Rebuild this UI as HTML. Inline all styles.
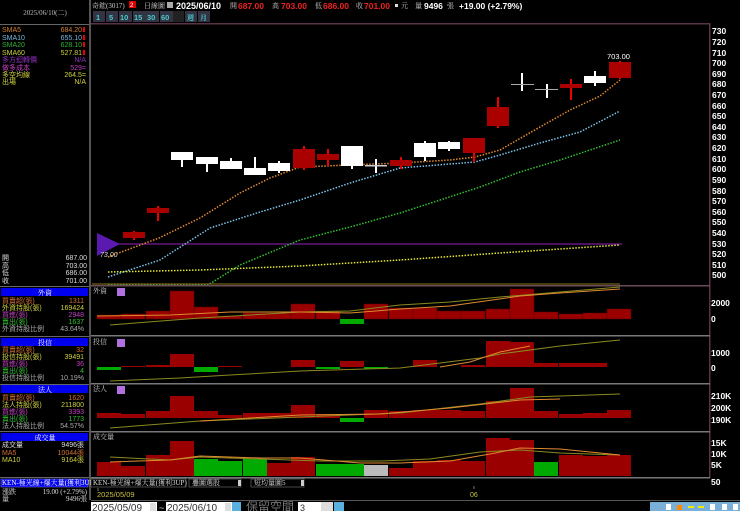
<!DOCTYPE html>
<html><head><meta charset="utf-8"><style>
html,body{margin:0;padding:0;background:#000;width:740px;height:511px;overflow:hidden}
svg{display:block}
text{font-family:"Liberation Sans","Noto Sans CJK TC",sans-serif}
.s{font-size:7px;font-family:"Liberation Serif","Noto Serif CJK SC",serif}
.ax{font-size:8.5px;fill:#fff;font-weight:bold}
</style></head><body>
<svg width="740" height="511" viewBox="0 0 740 511" xmlns="http://www.w3.org/2000/svg">
<rect width="740" height="511" fill="#000"/>
<!-- left panel -->
<rect x="89" y="0" width="2" height="500" fill="#555"/>
<text x="45" y="15" class="s" fill="#bbb" text-anchor="middle">2025/06/10(二)</text>
<rect x="0" y="24" width="89" height="1" fill="#666"/>
<g class="s">
<text x="2" y="32" fill="#d08030">SMA5</text><text x="82" y="32" fill="#d08030" text-anchor="end">684.20</text>
<text x="2" y="40" fill="#7ab8e0">SMA10</text><text x="82" y="40" fill="#7ab8e0" text-anchor="end">655.10</text>
<text x="2" y="47" fill="#30b030">SMA20</text><text x="82" y="47" fill="#30b030" text-anchor="end">628.10</text>
<text x="2" y="55" fill="#d0d040">SMA60</text><text x="82" y="55" fill="#d0d040" text-anchor="end">527.81</text>
<text x="2" y="62" fill="#9030c0">多方迴轉價</text><text x="86" y="62" fill="#9030c0" text-anchor="end">N/A</text>
<text x="2" y="70" fill="#c040c0">做多成本</text><text x="86" y="70" fill="#c040c0" text-anchor="end">529=</text>
<text x="2" y="77" fill="#d0d040">多空均線</text><text x="86" y="77" fill="#d0d040" text-anchor="end">264.5=</text>
<text x="2" y="84" fill="#d0d040">出場</text><text x="86" y="84" fill="#d0d040" text-anchor="end">N/A</text>
</g>
<g fill="#e00"><rect x="83" y="27" width="2" height="5"/><rect x="83" y="35" width="2" height="5"/><rect x="83" y="42" width="2" height="5"/><rect x="83" y="50" width="2" height="5"/></g>
<g class="s" fill="#ddd">
<text x="2" y="260">開</text><text x="87" y="260" text-anchor="end">687.00</text>
<text x="2" y="268">高</text><text x="87" y="268" text-anchor="end">703.00</text>
<text x="2" y="275">低</text><text x="87" y="275" text-anchor="end">686.00</text>
<text x="2" y="283">收</text><text x="87" y="283" text-anchor="end">701.00</text>
</g>
<rect x="0" y="286" width="89" height="1" fill="#666"/>
<rect x="1" y="288" width="87" height="8" fill="#0000ee"/><text x="45" y="295" class="s" fill="#fff" text-anchor="middle">外資</text>
<g class="s">
<text x="2" y="303" fill="#d07030">買賣超(張)</text><text x="84" y="303" fill="#d07030" text-anchor="end">1311</text>
<text x="2" y="310" fill="#d0d040">外資持股(張)</text><text x="84" y="310" fill="#d0d040" text-anchor="end">169424</text>
<text x="2" y="317" fill="#c040c0">買進(張)</text><text x="84" y="317" fill="#c040c0" text-anchor="end">2948</text>
<text x="2" y="324" fill="#30c030">賣出(張)</text><text x="84" y="324" fill="#30c030" text-anchor="end">1637</text>
<text x="2" y="331" fill="#aaa">外資持股比例</text><text x="84" y="331" fill="#aaa" text-anchor="end">43.64%</text>
</g>
<rect x="0" y="336" width="89" height="1" fill="#666"/>
<rect x="1" y="338" width="87" height="8" fill="#0000ee"/><text x="45" y="345" class="s" fill="#fff" text-anchor="middle">投信</text>
<g class="s">
<text x="2" y="352" fill="#d07030">買賣超(張)</text><text x="84" y="352" fill="#d07030" text-anchor="end">32</text>
<text x="2" y="359" fill="#d0d040">投信持股(張)</text><text x="84" y="359" fill="#d0d040" text-anchor="end">39491</text>
<text x="2" y="366" fill="#c040c0">買進(張)</text><text x="84" y="366" fill="#c040c0" text-anchor="end">36</text>
<text x="2" y="373" fill="#30c030">賣出(張)</text><text x="84" y="373" fill="#30c030" text-anchor="end">4</text>
<text x="2" y="380" fill="#aaa">投信持股比例</text><text x="84" y="380" fill="#aaa" text-anchor="end">10.19%</text>
</g>
<rect x="0" y="384" width="89" height="1" fill="#666"/>
<rect x="1" y="385" width="87" height="8" fill="#0000ee"/><text x="45" y="392" class="s" fill="#fff" text-anchor="middle">法人</text>
<g class="s">
<text x="2" y="400" fill="#d07030">買賣超(張)</text><text x="84" y="400" fill="#d07030" text-anchor="end">1620</text>
<text x="2" y="407" fill="#d0d040">法人持股(張)</text><text x="84" y="407" fill="#d0d040" text-anchor="end">211800</text>
<text x="2" y="414" fill="#c040c0">買進(張)</text><text x="84" y="414" fill="#c040c0" text-anchor="end">3393</text>
<text x="2" y="421" fill="#30c030">賣出(張)</text><text x="84" y="421" fill="#30c030" text-anchor="end">1773</text>
<text x="2" y="428" fill="#aaa">法人持股比例</text><text x="84" y="428" fill="#aaa" text-anchor="end">54.57%</text>
</g>
<rect x="0" y="431" width="89" height="1" fill="#666"/>
<rect x="1" y="433" width="87" height="8" fill="#0000ee"/><text x="45" y="440" class="s" fill="#fff" text-anchor="middle">成交量</text>
<g class="s">
<text x="2" y="447" fill="#ddd">成交量</text><text x="84" y="447" fill="#ddd" text-anchor="end">9496張</text>
<text x="2" y="455" fill="#d07030">MA5</text><text x="84" y="455" fill="#d07030" text-anchor="end">10044張</text>
<text x="2" y="462" fill="#d0d040">MA10</text><text x="84" y="462" fill="#d0d040" text-anchor="end">9164張</text>
</g>
<rect x="0" y="477" width="89" height="1" fill="#666"/>
<rect x="1" y="479" width="87" height="8" fill="#0000ee" stroke="#88f" stroke-width=".5"/><text x="2" y="485" class="s" fill="#fff" font-size="6">KEN-極光線+爆大量(獲利3UP)</text>
<text x="2" y="494" class="s" fill="#ddd">漲跌</text><text x="87" y="494" class="s" fill="#ddd" text-anchor="end">19.00 (+2.79%)</text>
<text x="2" y="501" class="s" fill="#ddd">量</text><text x="87" y="501" class="s" fill="#ddd" text-anchor="end">9496張</text>

<!-- top header -->
<text x="92" y="8" class="s" fill="#ccc">奇鋐(3017)</text><rect x="129" y="1" width="7" height="7" fill="#d00"/><text x="130" y="7" font-size="6" fill="#fff">2</text>
<text x="144" y="8" class="s" fill="#ccc">日線圖</text><rect x="167" y="2" width="6" height="6" fill="#aaa"/>
<text x="176" y="9" font-size="9" font-weight="bold" fill="#fff">2025/06/10</text>
<text x="230" y="8" class="s" fill="#ccc">開</text><text x="238" y="9" font-size="8.5" font-weight="bold" fill="#e22">687.00</text>
<text x="272" y="8" class="s" fill="#ccc">高</text><text x="281" y="9" font-size="8.5" font-weight="bold" fill="#e22">703.00</text>
<text x="315" y="8" class="s" fill="#ccc">低</text><text x="323" y="9" font-size="8.5" font-weight="bold" fill="#e22">686.00</text>
<text x="356" y="8" class="s" fill="#ccc">收</text><text x="364" y="9" font-size="8.5" font-weight="bold" fill="#e22">701.00</text>
<rect x="395" y="4" width="3" height="3" fill="#ddd"/><text x="401" y="8" class="s" fill="#ccc">元　量</text>
<text x="424" y="9" font-size="8.5" font-weight="bold" fill="#fff">9496</text><text x="447" y="8" class="s" fill="#ccc">張</text>
<text x="459" y="9" font-size="8.5" font-weight="bold" fill="#fff">+19.00 (+2.79%)</text>
<g font-size="7.5" font-weight="bold" fill="#4cc">
<rect x="93" y="11" width="12" height="11" fill="#334"/><text x="96" y="20">1</text>
<rect x="106" y="11" width="12" height="11" fill="#334"/><text x="109" y="20">5</text>
<rect x="119" y="11" width="13" height="11" fill="#334"/><text x="120" y="20">10</text>
<rect x="133" y="11" width="13" height="11" fill="#334"/><text x="134" y="20">15</text>
<rect x="146" y="11" width="13" height="11" fill="#334"/><text x="147" y="20">30</text>
<rect x="160" y="11" width="13" height="11" fill="#334"/><text x="161" y="20">60</text>
<rect x="173" y="11" width="11" height="11" fill="#222"/>
<rect x="185" y="11" width="12" height="11" fill="#334"/><text x="187" y="20" class="s" font-size="7">週</text>
<rect x="198" y="11" width="12" height="11" fill="#334"/><text x="200" y="20" class="s" font-size="7">月</text>
</g>
<rect x="91" y="23" width="619" height="1.5" fill="#5a3348"/>
<rect x="709" y="23" width="1.5" height="455" fill="#5a3348"/>

<!-- axis -->
<g class="ax">
<text x="712" y="34">730</text><text x="712" y="45">720</text><text x="712" y="56">710</text><text x="712" y="66">700</text><text x="712" y="77">690</text><text x="712" y="87">680</text><text x="712" y="98">670</text><text x="712" y="109">660</text><text x="712" y="119">650</text><text x="712" y="130">640</text><text x="712" y="140">630</text><text x="712" y="151">620</text><text x="712" y="162">610</text><text x="712" y="172">600</text><text x="712" y="183">590</text><text x="712" y="194">580</text><text x="712" y="204">570</text><text x="712" y="215">560</text><text x="712" y="225">550</text><text x="712" y="236">540</text><text x="712" y="247">530</text><text x="712" y="257">520</text><text x="712" y="268">510</text><text x="712" y="278">500</text>
<text x="711" y="306">2000</text><text x="711" y="322">0</text>
<text x="711" y="356">1000</text><text x="711" y="371">0</text>
<text x="711" y="399">210K</text><text x="711" y="411">200K</text><text x="711" y="423">190K</text>
<text x="711" y="446">15K</text><text x="711" y="457">10K</text><text x="711" y="468">5K</text>
<text x="711" y="485">50</text>
</g>

<!-- main chart lines -->
<line x1="118" y1="244" x2="622" y2="244" stroke="#7a1a9a" stroke-width="1.2"/>
<polygon points="97,233 97,256 120,244" fill="#5a1ab0"/>
<text x="100" y="257" font-size="7" fill="#ddd" font-style="italic">73.00</text>
<g fill="none" stroke-width="1.5" stroke-dasharray="1.5,1.5">
<polyline stroke="#e08a30" points="108,257 159,238 200,218 240,193 270,178 300,167 350,165 400,163 450,160 475,157 500,150 540,127 570,110 600,96 620,80"/>
<polyline stroke="#7ac0e8" points="108,277 160,260 210,228 260,212 300,200 350,183 400,168 450,164 475,162 500,155 540,143 580,132 620,111"/>
<polyline stroke="#30c030" points="108,285 208,285 240,265 300,240 350,227 400,213 440,200 480,187 520,172 560,160 620,140"/>
<polyline stroke="#e8e830" points="108,272 200,270 300,266 400,260 500,253 560,249 620,245"/>
</g>
<polyline fill="none" stroke="#8a7a20" stroke-width="1" points="92,284 620,284"/>

<!-- candles -->
<g fill="#a00" stroke="none">
<rect x="133" y="231" width="2" height="9" fill="#e00"/><rect x="123" y="232" width="22" height="6"/>
<rect x="157" y="206" width="2" height="15" fill="#e00"/><rect x="147" y="208" width="22" height="5"/>
<rect x="303" y="146" width="2" height="24" fill="#e00"/><rect x="293" y="149" width="22" height="19"/>
<rect x="327" y="149" width="2" height="17" fill="#e00"/><rect x="317" y="154" width="22" height="6"/>
<rect x="400" y="157" width="2" height="12" fill="#e00"/><rect x="390" y="160" width="22" height="6"/>
<rect x="473" y="138" width="2" height="24" fill="#e00"/><rect x="463" y="138" width="22" height="15"/>
<rect x="497" y="97" width="2" height="31" fill="#e00"/><rect x="487" y="107" width="22" height="19"/>
<rect x="570" y="79" width="2" height="21" fill="#e00"/><rect x="560" y="84" width="22" height="4"/>
<rect x="619" y="61" width="2" height="18" fill="#e00"/><rect x="609" y="62" width="22" height="16"/>
</g>
<g fill="#fff">
<rect x="181" y="152" width="2" height="15"/><rect x="171" y="152" width="22" height="8"/>
<rect x="206" y="157" width="2" height="15"/><rect x="196" y="157" width="22" height="7"/>
<rect x="230" y="158" width="2" height="11"/><rect x="220" y="161" width="22" height="8"/>
<rect x="254" y="157" width="2" height="18"/><rect x="244" y="168" width="22" height="7"/>
<rect x="278" y="161" width="2" height="12"/><rect x="268" y="163" width="22" height="8"/>
<rect x="351" y="146" width="2" height="23"/><rect x="341" y="146" width="22" height="20"/>
<rect x="375" y="159" width="2" height="14"/><rect x="365" y="165" width="22" height="1.5" fill="#ccc"/>
<rect x="424" y="141" width="2" height="20"/><rect x="414" y="143" width="22" height="14"/>
<rect x="448" y="141" width="2" height="10"/><rect x="438" y="142" width="22" height="7"/>
<rect x="521" y="73" width="2" height="18"/><rect x="511" y="84" width="23" height="1" fill="#aaa"/>
<rect x="546" y="84" width="2" height="14"/><rect x="535" y="89" width="23" height="1" fill="#aaa"/>
<rect x="594" y="71" width="2" height="15"/><rect x="584" y="76" width="22" height="7"/>
</g>
<text x="607" y="59" font-size="7.5" fill="#fff">703.00</text>

<!-- separators -->
<g fill="#777">
<rect x="91" y="285" width="619" height="1.5" fill="#6a4a5a"/>
<rect x="91" y="335" width="619" height="1.5"/>
<rect x="91" y="383" width="619" height="1.5"/>
<rect x="91" y="431" width="619" height="1.5"/>
<rect x="91" y="477" width="619" height="1.5"/>
</g>
<text x="93" y="293" class="s" fill="#ccc">外資</text><rect x="117" y="288" width="8" height="8" fill="#b070e0"/>
<text x="93" y="344" class="s" fill="#ccc">投信</text><rect x="117" y="339" width="8" height="8" fill="#b070e0"/>
<text x="93" y="391" class="s" fill="#ccc">法人</text><rect x="117" y="386" width="8" height="8" fill="#b070e0"/>
<text x="93" y="439" class="s" fill="#ccc">成交量</text>

<!-- panel1 base 319 -->
<g fill="#9a0000" stroke="#5a0000" stroke-width=".5">
<rect x="97" y="315" width="24" height="4"/><rect x="121" y="314" width="24" height="5"/><rect x="146" y="311" width="24" height="8"/><rect x="170" y="291" width="24" height="28"/><rect x="194" y="307" width="24" height="12"/><rect x="218" y="316" width="24" height="3"/><rect x="243" y="313" width="24" height="6"/><rect x="267" y="313" width="24" height="6"/><rect x="291" y="304" width="24" height="15"/><rect x="316" y="311" width="24" height="8"/><rect x="364" y="304" width="24" height="15"/><rect x="389" y="308" width="24" height="11"/><rect x="413" y="308" width="24" height="11"/><rect x="437" y="311" width="24" height="8"/><rect x="461" y="311" width="24" height="8"/><rect x="486" y="309" width="24" height="10"/><rect x="510" y="289" width="24" height="30"/><rect x="534" y="312" width="24" height="7"/><rect x="559" y="314" width="24" height="5"/><rect x="583" y="313" width="24" height="6"/><rect x="607" y="309" width="24" height="10"/>
</g>
<rect x="340" y="319" width="24" height="5" fill="#0a0"/>
<polyline fill="none" stroke="#8a8a20" stroke-width="1" points="110,325 200,318 300,312 350,311 400,305 450,302 500,297 560,292 620,287"/>
<polyline fill="none" stroke="#e08a30" stroke-width="1" points="97,316 170,315 230,312 300,312 350,313 400,309 450,306 520,296 560,293 620,289"/>

<!-- panel2 base 367 -->
<g fill="#9a0000">
<rect x="121" y="366" width="24" height="1"/><rect x="146" y="365" width="24" height="2"/><rect x="170" y="354" width="24" height="13"/><rect x="218" y="366" width="24" height="1"/><rect x="291" y="360" width="24" height="7"/><rect x="340" y="361" width="24" height="6"/><rect x="413" y="360" width="24" height="7"/><rect x="461" y="365" width="24" height="2"/><rect x="486" y="341" width="24" height="26"/><rect x="510" y="342" width="24" height="25"/><rect x="534" y="363" width="24" height="4"/><rect x="559" y="363" width="24" height="4"/><rect x="583" y="363" width="24" height="4"/>
</g>
<g fill="#0a0"><rect x="97" y="367" width="24" height="3"/><rect x="194" y="367" width="24" height="5"/><rect x="316" y="367" width="24" height="2"/><rect x="364" y="367" width="24" height="2"/></g>
<polyline fill="none" stroke="#8a8a20" stroke-width="1" points="110,381 180,378 230,375 300,371 400,368 480,358 500,354 560,346 620,340"/>
<polyline fill="none" stroke="#e08a30" stroke-width="1" points="440,367 470,362 500,352 530,346"/>

<!-- panel3 base 418 -->
<g fill="#9a0000">
<rect x="97" y="413" width="24" height="5"/><rect x="121" y="414" width="24" height="4"/><rect x="146" y="411" width="24" height="7"/><rect x="170" y="396" width="24" height="22"/><rect x="194" y="411" width="24" height="7"/><rect x="218" y="415" width="24" height="3"/><rect x="243" y="413" width="24" height="5"/><rect x="267" y="413" width="24" height="5"/><rect x="291" y="405" width="24" height="13"/><rect x="316" y="414" width="24" height="4"/><rect x="364" y="410" width="24" height="8"/><rect x="389" y="411" width="24" height="7"/><rect x="413" y="410" width="24" height="8"/><rect x="437" y="410" width="24" height="8"/><rect x="461" y="411" width="24" height="7"/><rect x="486" y="401" width="24" height="17"/><rect x="510" y="388" width="24" height="30"/><rect x="534" y="411" width="24" height="7"/><rect x="559" y="414" width="24" height="4"/><rect x="583" y="413" width="24" height="5"/><rect x="607" y="410" width="24" height="8"/>
</g>
<rect x="340" y="418" width="24" height="4" fill="#0a0"/>
<polyline fill="none" stroke="#8a8a20" stroke-width="1" points="110,428 200,421 300,417 400,413 480,404 530,397 620,394"/>
<polyline fill="none" stroke="#e08a30" stroke-width="1" points="200,421 300,415 380,414 450,408 520,400 560,399"/>

<!-- panel4 base 476 -->
<g fill="#9a0000">
<rect x="97" y="462" width="24" height="14"/><rect x="121" y="466" width="24" height="10"/><rect x="146" y="455" width="24" height="21"/><rect x="170" y="441" width="24" height="35"/><rect x="267" y="463" width="24" height="13"/><rect x="291" y="457" width="24" height="19"/><rect x="389" y="468" width="24" height="8"/><rect x="413" y="461" width="24" height="15"/><rect x="437" y="460" width="24" height="16"/><rect x="461" y="461" width="24" height="15"/><rect x="486" y="438" width="24" height="38"/><rect x="510" y="440" width="24" height="36"/><rect x="559" y="455" width="24" height="21"/><rect x="583" y="456" width="24" height="20"/><rect x="607" y="455" width="24" height="21"/>
</g>
<g fill="#0a0"><rect x="194" y="459" width="24" height="17"/><rect x="218" y="461" width="24" height="15"/><rect x="243" y="459" width="24" height="17"/><rect x="316" y="464" width="24" height="12"/><rect x="340" y="464" width="24" height="12"/><rect x="534" y="462" width="24" height="14"/></g>
<rect x="364" y="465" width="24" height="11" fill="#bbb"/>
<polyline fill="none" stroke="#8a8a20" stroke-width="1" points="110,457 170,460 200,457 260,459 320,461 380,461 430,459 480,452 520,450 560,453 620,455"/>
<polyline fill="none" stroke="#e08a30" stroke-width="1" points="110,462 170,460 200,456 260,458 300,458 360,463 400,463 450,461 490,454 520,448 560,449 600,453 620,455"/>

<!-- bottom controls -->
<rect x="91" y="479" width="95" height="8" fill="#000" stroke="#666" stroke-width=".7"/><text x="93" y="485" class="s" font-size="6" fill="#ddd">KEN-極光線+爆大量(獲利3UP)</text>
<rect x="189" y="479" width="52" height="8" fill="#000" stroke="#666" stroke-width=".7"/><text x="192" y="485" class="s" font-size="6" fill="#ddd">疊圖選股</text><rect x="238" y="480" width="3" height="6" fill="#ccc"/>
<rect x="251" y="479" width="53" height="8" fill="#000" stroke="#666" stroke-width=".7"/><text x="254" y="485" class="s" font-size="6" fill="#ddd">短均量圖5</text><rect x="301" y="480" width="3" height="6" fill="#ccc"/>
<line x1="98" y1="488" x2="98" y2="491" stroke="#aa9" stroke-width=".7"/>
<text x="97" y="497" font-size="7.5" fill="#c8c040">2025/05/09</text>
<line x1="474" y1="486" x2="474" y2="489" stroke="#aa9" stroke-width=".7"/>
<text x="470" y="497" font-size="7" fill="#c8c040">06</text>
<rect x="91" y="500" width="649" height="1" fill="#555"/>
<rect x="91" y="502" width="66" height="9" fill="#fff"/><text x="92" y="511" font-size="10" fill="#333">2025/05/09</text><rect x="150" y="503" width="6" height="8" fill="#ddd"/>
<text x="159" y="511" font-size="9" fill="#ccc">~</text>
<rect x="166" y="502" width="66" height="9" fill="#fff"/><text x="167" y="511" font-size="10" fill="#333">2025/06/10</text><rect x="225" y="503" width="6" height="8" fill="#ddd"/>
<rect x="232" y="502" width="9" height="9" fill="#5ab0e0"/>
<text x="246" y="511" font-size="12" fill="#777">保留空間</text>
<rect x="298" y="502" width="23" height="9" fill="#fff"/><text x="300" y="511" font-size="9" fill="#333">3</text>
<rect x="321" y="502" width="12" height="9" fill="#ddd"/>
<rect x="334" y="502" width="10" height="9" fill="#5ab0e0"/>
<rect x="650" y="502" width="90" height="9" fill="#7ab0d8"/>
<g fill="#fff"><rect x="666" y="504" width="5" height="6"/><rect x="677" y="505" width="5" height="5" fill="#f80"/><rect x="688" y="506" width="6" height="2" fill="#ee0"/><rect x="698" y="506" width="6" height="2" fill="#ee0"/><rect x="710" y="504" width="5" height="6"/><rect x="722" y="504" width="5" height="6"/><rect x="733" y="504" width="5" height="6"/></g>
</svg>
</body></html>
